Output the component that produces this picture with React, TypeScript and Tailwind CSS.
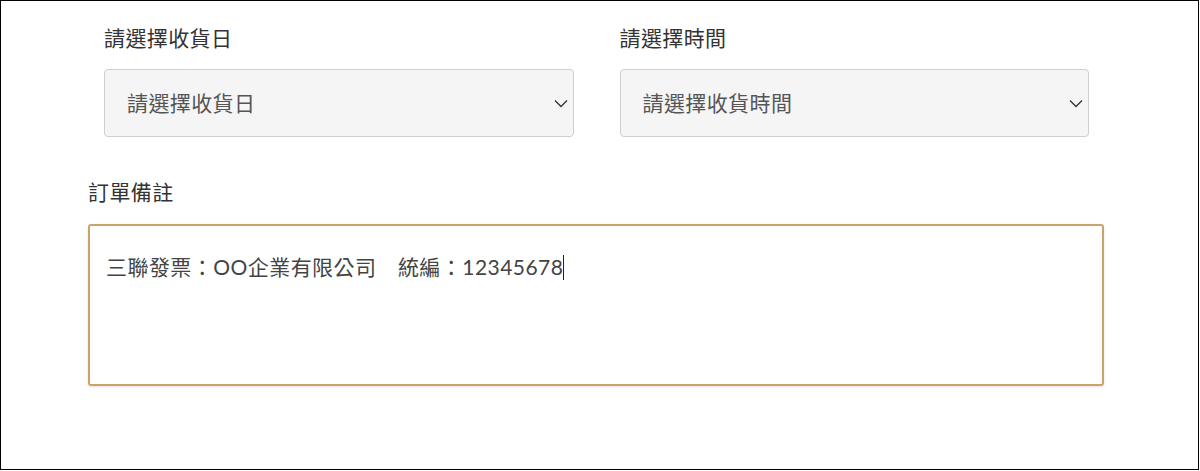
import React from "react";

const font = { fontFamily: 'Lato, "Noto Sans CJK TC", sans-serif' };

function Chevron() {
  return (
    <svg width="14" height="9" viewBox="0 0 14 9" fill="none" className="shrink-0">
      <path d="M1 1.5 L7 7.5 L13 1.5" stroke="#333" strokeWidth="1.3" />
    </svg>
  );
}

function SelectField({ label, placeholder }: { label: string; placeholder: string }) {
  return (
    <div className="flex flex-col">
      <div className="text-[21px] leading-[28px] text-[#333] tracking-[0.4px]">{label}</div>
      <div className="mt-[17px] h-[68px] bg-[#f5f5f5] border border-[#cfcfcf] rounded-[4px] flex items-center justify-between pl-[22px] pr-[5px]">
        <span className="text-[21px] text-[#555] tracking-[0.4px]">{placeholder}</span>
        <Chevron />
      </div>
    </div>
  );
}

export default function App() {
  return (
    <div className="w-[1200px] h-[471px] bg-white" style={font}>
      <div className="w-[1199px] h-[470px] border border-black flex flex-col">
        <div className="pl-[87px] pr-[93px] pt-[23px]">
          <div className="grid grid-cols-2 gap-[46px] px-4">
            <SelectField label="請選擇收貨日" placeholder="請選擇收貨日" />
            <SelectField label="請選擇時間" placeholder="請選擇收貨時間" />
          </div>
          <div className="mt-[41px] text-[21px] leading-[28px] text-[#333] tracking-[0.4px]">訂單備註</div>
          <div className="mt-[18px] mr-px h-[162px] border-2 border-[#c9a36a] rounded-[3px] shadow-[0_1px_3px_rgba(0,0,0,0.12)] pl-[16px] pt-[28px]">
            <div className="flex items-center text-[21px] leading-[26px] text-[#444] tracking-[0.45px]">
              <span>三聯發票：OO企業有限公司　統編：12345678</span>
              <span className="inline-block w-px h-[25px] bg-[#222]" />
            </div>
          </div>
        </div>
      </div>
    </div>
  );
}
